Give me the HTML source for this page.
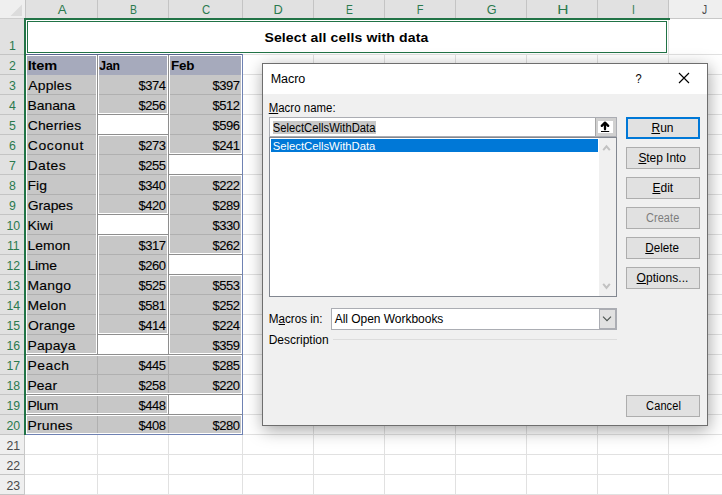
<!DOCTYPE html>
<html><head><meta charset="utf-8"><title>Macro</title>
<style>
html,body{margin:0;padding:0;}
body{width:722px;height:495px;overflow:hidden;background:#fff;position:relative;font-family:"Liberation Sans",sans-serif;}
div,span{box-sizing:border-box;}
.a{position:absolute;}
.ch{position:absolute;top:0;height:18px;font-size:12.3px;line-height:1;text-align:center;padding-top:4.4px;}
.rh{position:absolute;left:0;width:24px;padding-left:1px;font-size:12.3px;text-align:center;line-height:1;}
.t{position:absolute;line-height:1;white-space:nowrap;}
.num{position:absolute;line-height:1;white-space:nowrap;font-size:13px;text-align:right;-webkit-text-stroke:0.1px #000;}
.b{font-weight:bold;}
.btn{position:absolute;left:626px;width:74px;height:22px;background:#e1e1e1;border:1px solid #adadad;}
u{text-decoration:underline;text-underline-offset:1px;text-decoration-thickness:1px;}
i{display:inline-block;width:0;height:0;}
</style></head><body>

<div class="a" style="left:97px;top:18px;width:1px;height:477px;background:#e1e1e1"></div>
<div class="a" style="left:168px;top:18px;width:1px;height:477px;background:#e1e1e1"></div>
<div class="a" style="left:242px;top:18px;width:1px;height:477px;background:#e1e1e1"></div>
<div class="a" style="left:313px;top:18px;width:1px;height:477px;background:#e1e1e1"></div>
<div class="a" style="left:384px;top:18px;width:1px;height:477px;background:#e1e1e1"></div>
<div class="a" style="left:455px;top:18px;width:1px;height:477px;background:#e1e1e1"></div>
<div class="a" style="left:526px;top:18px;width:1px;height:477px;background:#e1e1e1"></div>
<div class="a" style="left:597px;top:18px;width:1px;height:477px;background:#e1e1e1"></div>
<div class="a" style="left:668px;top:18px;width:1px;height:477px;background:#e1e1e1"></div>
<div class="a" style="left:25px;top:54px;width:697px;height:1px;background:#e1e1e1"></div>
<div class="a" style="left:25px;top:74px;width:697px;height:1px;background:#e1e1e1"></div>
<div class="a" style="left:25px;top:94px;width:697px;height:1px;background:#e1e1e1"></div>
<div class="a" style="left:25px;top:114px;width:697px;height:1px;background:#e1e1e1"></div>
<div class="a" style="left:25px;top:134px;width:697px;height:1px;background:#e1e1e1"></div>
<div class="a" style="left:25px;top:154px;width:697px;height:1px;background:#e1e1e1"></div>
<div class="a" style="left:25px;top:174px;width:697px;height:1px;background:#e1e1e1"></div>
<div class="a" style="left:25px;top:194px;width:697px;height:1px;background:#e1e1e1"></div>
<div class="a" style="left:25px;top:214px;width:697px;height:1px;background:#e1e1e1"></div>
<div class="a" style="left:25px;top:234px;width:697px;height:1px;background:#e1e1e1"></div>
<div class="a" style="left:25px;top:254px;width:697px;height:1px;background:#e1e1e1"></div>
<div class="a" style="left:25px;top:274px;width:697px;height:1px;background:#e1e1e1"></div>
<div class="a" style="left:25px;top:294px;width:697px;height:1px;background:#e1e1e1"></div>
<div class="a" style="left:25px;top:314px;width:697px;height:1px;background:#e1e1e1"></div>
<div class="a" style="left:25px;top:334px;width:697px;height:1px;background:#e1e1e1"></div>
<div class="a" style="left:25px;top:354px;width:697px;height:1px;background:#e1e1e1"></div>
<div class="a" style="left:25px;top:374px;width:697px;height:1px;background:#e1e1e1"></div>
<div class="a" style="left:25px;top:394px;width:697px;height:1px;background:#e1e1e1"></div>
<div class="a" style="left:25px;top:414px;width:697px;height:1px;background:#e1e1e1"></div>
<div class="a" style="left:25px;top:434px;width:697px;height:1px;background:#e1e1e1"></div>
<div class="a" style="left:25px;top:454px;width:697px;height:1px;background:#e1e1e1"></div>
<div class="a" style="left:25px;top:474px;width:697px;height:1px;background:#e1e1e1"></div>
<div class="a" style="left:25px;top:494px;width:697px;height:1px;background:#e1e1e1"></div>
<div class="a" style="left:0;top:0;width:722px;height:19px;background:#e1e1e1"></div>
<div class="ch" style="left:25px;width:72px;background:#e1e1e1;color:#2a7a4e;">&nbsp;</div>
<div class="a" style="left:97px;top:0;width:1px;height:18px;background:#c4c4c4"></div>
<div class="ch" style="left:98px;width:70px;background:#e1e1e1;color:#2a7a4e;">&nbsp;</div>
<div class="a" style="left:168px;top:0;width:1px;height:18px;background:#c4c4c4"></div>
<div class="ch" style="left:169px;width:73px;background:#e1e1e1;color:#2a7a4e;">&nbsp;</div>
<div class="a" style="left:242px;top:0;width:1px;height:18px;background:#c4c4c4"></div>
<div class="ch" style="left:243px;width:70px;background:#e1e1e1;color:#2a7a4e;">&nbsp;</div>
<div class="a" style="left:313px;top:0;width:1px;height:18px;background:#c4c4c4"></div>
<div class="ch" style="left:314px;width:70px;background:#e1e1e1;color:#2a7a4e;">&nbsp;</div>
<div class="a" style="left:384px;top:0;width:1px;height:18px;background:#c4c4c4"></div>
<div class="ch" style="left:385px;width:70px;background:#e1e1e1;color:#2a7a4e;">&nbsp;</div>
<div class="a" style="left:455px;top:0;width:1px;height:18px;background:#c4c4c4"></div>
<div class="ch" style="left:456px;width:70px;background:#e1e1e1;color:#2a7a4e;">&nbsp;</div>
<div class="a" style="left:526px;top:0;width:1px;height:18px;background:#c4c4c4"></div>
<div class="ch" style="left:527px;width:70px;background:#e1e1e1;color:#2a7a4e;">&nbsp;</div>
<div class="a" style="left:597px;top:0;width:1px;height:18px;background:#c4c4c4"></div>
<div class="ch" style="left:598px;width:70px;background:#e1e1e1;color:#2a7a4e;">&nbsp;</div>
<div class="a" style="left:668px;top:0;width:1px;height:18px;background:#c4c4c4"></div>
<div class="ch" style="left:669px;width:71px;background:#efefef;color:#4a4a4a;">&nbsp;</div>
<div class="a" style="left:740px;top:0;width:1px;height:18px;background:#c4c4c4"></div>
<span class="t" style="left:0;top:4.00px;transform:translateX(57.67px) scaleX(1.0844383308693886);transform-origin:0 0;font-size:12.3px;letter-spacing:0.000px;color:#2a7a4e;">A</span>
<span class="t" style="left:0;top:4.00px;transform:translateX(129.92px) scaleX(0.8454118130112412);transform-origin:0 0;font-size:12.3px;letter-spacing:0.000px;color:#2a7a4e;">B</span>
<span class="t" style="left:0;top:4.00px;transform:translateX(201.99px) scaleX(0.9200862107372179);transform-origin:0 0;font-size:12.3px;letter-spacing:0.000px;color:#2a7a4e;">C</span>
<span class="t" style="left:0;top:4.00px;transform:translateX(273.46px) scaleX(1.0417185352773914);transform-origin:0 0;font-size:12.3px;letter-spacing:0.000px;color:#2a7a4e;">D</span>
<span class="t" style="left:0;top:4.00px;transform:translateX(345.90px) scaleX(0.8341477238652925);transform-origin:0 0;font-size:12.3px;letter-spacing:0.000px;color:#2a7a4e;">E</span>
<span class="t" style="left:0;top:4.00px;transform:translateX(416.63px) scaleX(0.896300202246782);transform-origin:0 0;font-size:12.3px;letter-spacing:0.000px;color:#2a7a4e;">F</span>
<span class="t" style="left:0;top:4.00px;transform:translateX(486.84px) scaleX(1.030000920887029);transform-origin:0 0;font-size:12.3px;letter-spacing:0.000px;color:#2a7a4e;">G</span>
<span class="t" style="left:0;top:4.00px;transform:translateX(557.14px) scaleX(1.2595757007492718);transform-origin:0 0;font-size:12.3px;letter-spacing:0.000px;color:#2a7a4e;">H</span>
<span class="t" style="left:0;top:4.00px;transform:translateX(631.95px) scaleX(0.8370191270378207);transform-origin:0 0;font-size:12.3px;letter-spacing:0.000px;color:#2a7a4e;">I</span>
<span class="t" style="left:0;top:4.00px;transform:translateX(701.97px) scaleX(0.8395853048874047);transform-origin:0 0;font-size:12.3px;letter-spacing:0.000px;color:#4a4a4a;">J</span>
<div class="a" style="left:0;top:0;width:25px;height:19px;background:#efefef"></div>
<svg class="a" style="left:0;top:0" width="25" height="18"><path d="M22 4.5 L22 16 L10.5 16 Z" fill="#dcdcdc"/></svg>
<div class="a" style="left:25px;top:0;width:1px;height:18px;background:#c4c4c4"></div>
<div class="a" style="left:0;top:18px;width:24px;height:1px;background:#cdcdcd"></div>
<div class="a" style="left:669px;top:18px;width:53px;height:1px;background:#c8c8c8"></div>
<div class="rh" style="top:19px;height:35px;background:#e1e1e1;color:#2a7a4e;padding-top:20.60px;padding-left:1px">1</div>
<div class="a" style="left:0;top:54px;width:24px;height:1px;background:#c4c4c4"></div>
<div class="rh" style="top:55px;height:19px;background:#e1e1e1;color:#2a7a4e;padding-top:4.60px;padding-left:1px">2</div>
<div class="a" style="left:0;top:74px;width:24px;height:1px;background:#c4c4c4"></div>
<div class="rh" style="top:75px;height:19px;background:#e1e1e1;color:#2a7a4e;padding-top:4.60px;padding-left:1px">3</div>
<div class="a" style="left:0;top:94px;width:24px;height:1px;background:#c4c4c4"></div>
<div class="rh" style="top:95px;height:19px;background:#e1e1e1;color:#2a7a4e;padding-top:4.60px;padding-left:1px">4</div>
<div class="a" style="left:0;top:114px;width:24px;height:1px;background:#c4c4c4"></div>
<div class="rh" style="top:115px;height:19px;background:#e1e1e1;color:#2a7a4e;padding-top:4.60px;padding-left:1px">5</div>
<div class="a" style="left:0;top:134px;width:24px;height:1px;background:#c4c4c4"></div>
<div class="rh" style="top:135px;height:19px;background:#e1e1e1;color:#2a7a4e;padding-top:4.60px;padding-left:1px">6</div>
<div class="a" style="left:0;top:154px;width:24px;height:1px;background:#c4c4c4"></div>
<div class="rh" style="top:155px;height:19px;background:#e1e1e1;color:#2a7a4e;padding-top:4.60px;padding-left:1px">7</div>
<div class="a" style="left:0;top:174px;width:24px;height:1px;background:#c4c4c4"></div>
<div class="rh" style="top:175px;height:19px;background:#e1e1e1;color:#2a7a4e;padding-top:4.60px;padding-left:1px">8</div>
<div class="a" style="left:0;top:194px;width:24px;height:1px;background:#c4c4c4"></div>
<div class="rh" style="top:195px;height:19px;background:#e1e1e1;color:#2a7a4e;padding-top:4.60px;padding-left:1px">9</div>
<div class="a" style="left:0;top:214px;width:24px;height:1px;background:#c4c4c4"></div>
<div class="rh" style="top:215px;height:19px;background:#e1e1e1;color:#2a7a4e;padding-top:4.60px;padding-left:2.6px">10</div>
<div class="a" style="left:0;top:234px;width:24px;height:1px;background:#c4c4c4"></div>
<div class="rh" style="top:235px;height:19px;background:#e1e1e1;color:#2a7a4e;padding-top:4.60px;padding-left:2.6px">11</div>
<div class="a" style="left:0;top:254px;width:24px;height:1px;background:#c4c4c4"></div>
<div class="rh" style="top:255px;height:19px;background:#e1e1e1;color:#2a7a4e;padding-top:4.60px;padding-left:2.6px">12</div>
<div class="a" style="left:0;top:274px;width:24px;height:1px;background:#c4c4c4"></div>
<div class="rh" style="top:275px;height:19px;background:#e1e1e1;color:#2a7a4e;padding-top:4.60px;padding-left:2.6px">13</div>
<div class="a" style="left:0;top:294px;width:24px;height:1px;background:#c4c4c4"></div>
<div class="rh" style="top:295px;height:19px;background:#e1e1e1;color:#2a7a4e;padding-top:4.60px;padding-left:2.6px">14</div>
<div class="a" style="left:0;top:314px;width:24px;height:1px;background:#c4c4c4"></div>
<div class="rh" style="top:315px;height:19px;background:#e1e1e1;color:#2a7a4e;padding-top:4.60px;padding-left:2.6px">15</div>
<div class="a" style="left:0;top:334px;width:24px;height:1px;background:#c4c4c4"></div>
<div class="rh" style="top:335px;height:19px;background:#e1e1e1;color:#2a7a4e;padding-top:4.60px;padding-left:2.6px">16</div>
<div class="a" style="left:0;top:354px;width:24px;height:1px;background:#c4c4c4"></div>
<div class="rh" style="top:355px;height:19px;background:#e1e1e1;color:#2a7a4e;padding-top:4.60px;padding-left:2.6px">17</div>
<div class="a" style="left:0;top:374px;width:24px;height:1px;background:#c4c4c4"></div>
<div class="rh" style="top:375px;height:19px;background:#e1e1e1;color:#2a7a4e;padding-top:4.60px;padding-left:2.6px">18</div>
<div class="a" style="left:0;top:394px;width:24px;height:1px;background:#c4c4c4"></div>
<div class="rh" style="top:395px;height:19px;background:#e1e1e1;color:#2a7a4e;padding-top:4.60px;padding-left:2.6px">19</div>
<div class="a" style="left:0;top:414px;width:24px;height:1px;background:#c4c4c4"></div>
<div class="rh" style="top:415px;height:19px;background:#e1e1e1;color:#2a7a4e;padding-top:4.60px;padding-left:2.6px">20</div>
<div class="a" style="left:0;top:434px;width:24px;height:1px;background:#c4c4c4"></div>
<div class="rh" style="top:435px;height:19px;background:#efefef;color:#4a4a4a;padding-top:4.60px;padding-left:2.6px">21</div>
<div class="a" style="left:0;top:454px;width:24px;height:1px;background:#c4c4c4"></div>
<div class="rh" style="top:455px;height:19px;background:#efefef;color:#4a4a4a;padding-top:4.60px;padding-left:2.6px">22</div>
<div class="a" style="left:0;top:474px;width:24px;height:1px;background:#c4c4c4"></div>
<div class="rh" style="top:475px;height:19px;background:#efefef;color:#4a4a4a;padding-top:4.60px;padding-left:2.6px">23</div>
<div class="a" style="left:0;top:494px;width:24px;height:1px;background:#c4c4c4"></div>
<div class="a" style="left:24px;top:435px;width:1px;height:60px;background:#c8c8c8"></div>
<div class="a" style="left:24px;top:18px;width:646px;height:2px;background:#217346"></div>
<div class="a" style="left:24px;top:18px;width:2px;height:417px;background:#217346"></div>
<div class="a" style="left:26px;top:20px;width:1px;height:415px;background:#fff"></div>
<div class="a" style="left:26px;top:20px;width:642px;height:34px;background:#fff"></div>
<div class="a" style="left:27px;top:21px;width:640px;height:32px;border:1px solid #217346;background:#fff"></div>
<span class="t" style="left:0;top:31.01px;transform:translateX(264.41px) scaleX(1.04);transform-origin:0 0;font-size:13.5px;letter-spacing:0.119px;color:#000;font-weight:bold;">Select all cells with data</span>
<div class="a" style="left:26px;top:54px;width:72px;height:301px;background:#8e8e8e"></div>
<div class="a" style="left:26px;top:55px;width:71px;height:299px;background:#fff"></div>
<div class="a" style="left:27px;top:56px;width:69px;height:297px;background:#c7c7c7"></div>
<div class="a" style="left:27px;top:56px;width:69px;height:19px;background:#a6aabc"></div>
<div class="a" style="left:27px;top:94px;width:69px;height:1px;background:#b0b0b0"></div>
<div class="a" style="left:27px;top:114px;width:69px;height:1px;background:#b0b0b0"></div>
<div class="a" style="left:27px;top:134px;width:69px;height:1px;background:#b0b0b0"></div>
<div class="a" style="left:27px;top:154px;width:69px;height:1px;background:#b0b0b0"></div>
<div class="a" style="left:27px;top:174px;width:69px;height:1px;background:#b0b0b0"></div>
<div class="a" style="left:27px;top:194px;width:69px;height:1px;background:#b0b0b0"></div>
<div class="a" style="left:27px;top:214px;width:69px;height:1px;background:#b0b0b0"></div>
<div class="a" style="left:27px;top:234px;width:69px;height:1px;background:#b0b0b0"></div>
<div class="a" style="left:27px;top:254px;width:69px;height:1px;background:#b0b0b0"></div>
<div class="a" style="left:27px;top:274px;width:69px;height:1px;background:#b0b0b0"></div>
<div class="a" style="left:27px;top:294px;width:69px;height:1px;background:#b0b0b0"></div>
<div class="a" style="left:27px;top:314px;width:69px;height:1px;background:#b0b0b0"></div>
<div class="a" style="left:27px;top:334px;width:69px;height:1px;background:#b0b0b0"></div>
<div class="a" style="left:97px;top:54px;width:72px;height:61px;background:#8e8e8e"></div>
<div class="a" style="left:98px;top:55px;width:70px;height:59px;background:#fff"></div>
<div class="a" style="left:99px;top:56px;width:68px;height:57px;background:#c7c7c7"></div>
<div class="a" style="left:99px;top:56px;width:68px;height:19px;background:#a6aabc"></div>
<div class="a" style="left:99px;top:94px;width:68px;height:1px;background:#b0b0b0"></div>
<div class="a" style="left:168px;top:54px;width:75px;height:101px;background:#8e8e8e"></div>
<div class="a" style="left:169px;top:55px;width:73px;height:99px;background:#fff"></div>
<div class="a" style="left:170px;top:56px;width:71px;height:97px;background:#c7c7c7"></div>
<div class="a" style="left:170px;top:56px;width:71px;height:19px;background:#a6aabc"></div>
<div class="a" style="left:170px;top:94px;width:71px;height:1px;background:#b0b0b0"></div>
<div class="a" style="left:170px;top:114px;width:71px;height:1px;background:#b0b0b0"></div>
<div class="a" style="left:170px;top:134px;width:71px;height:1px;background:#b0b0b0"></div>
<div class="a" style="left:97px;top:134px;width:72px;height:81px;background:#8e8e8e"></div>
<div class="a" style="left:98px;top:135px;width:70px;height:79px;background:#fff"></div>
<div class="a" style="left:99px;top:136px;width:68px;height:77px;background:#c7c7c7"></div>
<div class="a" style="left:99px;top:154px;width:68px;height:1px;background:#b0b0b0"></div>
<div class="a" style="left:99px;top:174px;width:68px;height:1px;background:#b0b0b0"></div>
<div class="a" style="left:99px;top:194px;width:68px;height:1px;background:#b0b0b0"></div>
<div class="a" style="left:168px;top:174px;width:75px;height:81px;background:#8e8e8e"></div>
<div class="a" style="left:169px;top:175px;width:73px;height:79px;background:#fff"></div>
<div class="a" style="left:170px;top:176px;width:71px;height:77px;background:#c7c7c7"></div>
<div class="a" style="left:170px;top:194px;width:71px;height:1px;background:#b0b0b0"></div>
<div class="a" style="left:170px;top:214px;width:71px;height:1px;background:#b0b0b0"></div>
<div class="a" style="left:170px;top:234px;width:71px;height:1px;background:#b0b0b0"></div>
<div class="a" style="left:97px;top:234px;width:72px;height:101px;background:#8e8e8e"></div>
<div class="a" style="left:98px;top:235px;width:70px;height:99px;background:#fff"></div>
<div class="a" style="left:99px;top:236px;width:68px;height:97px;background:#c7c7c7"></div>
<div class="a" style="left:99px;top:254px;width:68px;height:1px;background:#b0b0b0"></div>
<div class="a" style="left:99px;top:274px;width:68px;height:1px;background:#b0b0b0"></div>
<div class="a" style="left:99px;top:294px;width:68px;height:1px;background:#b0b0b0"></div>
<div class="a" style="left:99px;top:314px;width:68px;height:1px;background:#b0b0b0"></div>
<div class="a" style="left:168px;top:274px;width:75px;height:81px;background:#8e8e8e"></div>
<div class="a" style="left:169px;top:275px;width:73px;height:79px;background:#fff"></div>
<div class="a" style="left:170px;top:276px;width:71px;height:77px;background:#c7c7c7"></div>
<div class="a" style="left:170px;top:294px;width:71px;height:1px;background:#b0b0b0"></div>
<div class="a" style="left:170px;top:314px;width:71px;height:1px;background:#b0b0b0"></div>
<div class="a" style="left:170px;top:334px;width:71px;height:1px;background:#b0b0b0"></div>
<div class="a" style="left:26px;top:354px;width:217px;height:41px;background:#8e8e8e"></div>
<div class="a" style="left:26px;top:355px;width:216px;height:39px;background:#fff"></div>
<div class="a" style="left:27px;top:356px;width:214px;height:37px;background:#c7c7c7"></div>
<div class="a" style="left:27px;top:374px;width:214px;height:1px;background:#b0b0b0"></div>
<div class="a" style="left:97px;top:356px;width:1px;height:37px;background:#b0b0b0"></div>
<div class="a" style="left:168px;top:356px;width:1px;height:37px;background:#b0b0b0"></div>
<div class="a" style="left:26px;top:394px;width:143px;height:21px;background:#8e8e8e"></div>
<div class="a" style="left:26px;top:395px;width:142px;height:19px;background:#fff"></div>
<div class="a" style="left:27px;top:396px;width:140px;height:17px;background:#c7c7c7"></div>
<div class="a" style="left:97px;top:396px;width:1px;height:17px;background:#b0b0b0"></div>
<div class="a" style="left:26px;top:414px;width:217px;height:21px;background:#8e8e8e"></div>
<div class="a" style="left:26px;top:415px;width:216px;height:19px;background:#fff"></div>
<div class="a" style="left:27px;top:416px;width:214px;height:17px;background:#c7c7c7"></div>
<div class="a" style="left:97px;top:416px;width:1px;height:17px;background:#b0b0b0"></div>
<div class="a" style="left:168px;top:416px;width:1px;height:17px;background:#b0b0b0"></div>
<div class="a" style="left:26px;top:54px;width:217px;height:1px;background:#56648f"></div>
<div class="a" style="left:242px;top:54px;width:1px;height:381px;background:#6e81b2"></div>
<div class="a" style="left:26px;top:434px;width:217px;height:1px;background:#6e81b2"></div>
<span class="t" style="left:0;top:59.00px;transform:translateX(27.68px) scaleX(1.12);transform-origin:0 0;font-size:13px;letter-spacing:-0.114px;color:#000;font-weight:bold;">Item</span>
<span class="t" style="left:0;top:59.00px;transform:translateX(99.21px) scaleX(0.94);transform-origin:0 0;font-size:13px;letter-spacing:-0.119px;color:#000;font-weight:bold;">Jan</span>
<span class="t" style="left:0;top:59.00px;transform:translateX(170.96px) scaleX(1.03);transform-origin:0 0;font-size:13px;letter-spacing:-0.124px;color:#000;font-weight:bold;">Feb</span>
<span class="t" style="left:0;top:79.00px;transform:translateX(28.36px) scaleX(1.07);transform-origin:0 0;font-size:13px;letter-spacing:0.129px;color:#000;-webkit-text-stroke:0.12px #000;">Apples</span>
<span class="num" style="left:100px;width:65.55px;top:79px;letter-spacing:-0.45px">$374</span>
<span class="num" style="left:172px;width:67.55px;top:79px;letter-spacing:-0.45px">$397</span>
<span class="t" style="left:0;top:99.00px;transform:translateX(27.46px) scaleX(1.07);transform-origin:0 0;font-size:13px;letter-spacing:-0.023px;color:#000;-webkit-text-stroke:0.12px #000;">Banana</span>
<span class="num" style="left:100px;width:65.55px;top:99px;letter-spacing:-0.45px">$256</span>
<span class="num" style="left:172px;width:67.55px;top:99px;letter-spacing:-0.45px">$512</span>
<span class="t" style="left:0;top:119.00px;transform:translateX(27.86px) scaleX(1.07);transform-origin:0 0;font-size:13px;letter-spacing:0.088px;color:#000;-webkit-text-stroke:0.12px #000;">Cherries</span>
<span class="num" style="left:172px;width:67.55px;top:119px;letter-spacing:-0.45px">$596</span>
<span class="t" style="left:0;top:139.00px;transform:translateX(27.86px) scaleX(1.07);transform-origin:0 0;font-size:13px;letter-spacing:0.567px;color:#000;-webkit-text-stroke:0.12px #000;">Coconut</span>
<span class="num" style="left:100px;width:65.55px;top:139px;letter-spacing:-0.45px">$273</span>
<span class="num" style="left:172px;width:67.55px;top:139px;letter-spacing:-0.45px">$241</span>
<span class="t" style="left:0;top:159.00px;transform:translateX(27.46px) scaleX(1.07);transform-origin:0 0;font-size:13px;letter-spacing:0.441px;color:#000;-webkit-text-stroke:0.12px #000;">Dates</span>
<span class="num" style="left:100px;width:65.55px;top:159px;letter-spacing:-0.45px">$255</span>
<span class="t" style="left:0;top:179.00px;transform:translateX(27.46px) scaleX(1.07);transform-origin:0 0;font-size:13px;letter-spacing:0.139px;color:#000;-webkit-text-stroke:0.12px #000;">Fig</span>
<span class="num" style="left:100px;width:65.55px;top:179px;letter-spacing:-0.45px">$340</span>
<span class="num" style="left:172px;width:67.55px;top:179px;letter-spacing:-0.45px">$222</span>
<span class="t" style="left:0;top:199.00px;transform:translateX(27.86px) scaleX(1.07);transform-origin:0 0;font-size:13px;letter-spacing:-0.098px;color:#000;-webkit-text-stroke:0.12px #000;">Grapes</span>
<span class="num" style="left:100px;width:65.55px;top:199px;letter-spacing:-0.45px">$420</span>
<span class="num" style="left:172px;width:67.55px;top:199px;letter-spacing:-0.45px">$289</span>
<span class="t" style="left:0;top:219.00px;transform:translateX(27.54px) scaleX(1.07);transform-origin:0 0;font-size:13px;letter-spacing:0.020px;color:#000;-webkit-text-stroke:0.12px #000;">Kiwi</span>
<span class="num" style="left:172px;width:67.55px;top:219px;letter-spacing:-0.45px">$330</span>
<span class="t" style="left:0;top:239.00px;transform:translateX(27.46px) scaleX(1.07);transform-origin:0 0;font-size:13px;letter-spacing:0.034px;color:#000;-webkit-text-stroke:0.12px #000;">Lemon</span>
<span class="num" style="left:100px;width:65.55px;top:239px;letter-spacing:-0.45px">$317</span>
<span class="num" style="left:172px;width:67.55px;top:239px;letter-spacing:-0.45px">$262</span>
<span class="t" style="left:0;top:259.00px;transform:translateX(27.46px) scaleX(1.07);transform-origin:0 0;font-size:13px;letter-spacing:-0.225px;color:#000;-webkit-text-stroke:0.12px #000;">Lime</span>
<span class="num" style="left:100px;width:65.55px;top:259px;letter-spacing:-0.45px">$260</span>
<span class="t" style="left:0;top:279.00px;transform:translateX(27.46px) scaleX(1.07);transform-origin:0 0;font-size:13px;letter-spacing:0.213px;color:#000;-webkit-text-stroke:0.12px #000;">Mango</span>
<span class="num" style="left:100px;width:65.55px;top:279px;letter-spacing:-0.45px">$525</span>
<span class="num" style="left:172px;width:67.55px;top:279px;letter-spacing:-0.45px">$553</span>
<span class="t" style="left:0;top:299.00px;transform:translateX(27.46px) scaleX(1.07);transform-origin:0 0;font-size:13px;letter-spacing:0.224px;color:#000;-webkit-text-stroke:0.12px #000;">Melon</span>
<span class="num" style="left:100px;width:65.55px;top:299px;letter-spacing:-0.45px">$581</span>
<span class="num" style="left:172px;width:67.55px;top:299px;letter-spacing:-0.45px">$252</span>
<span class="t" style="left:0;top:319.00px;transform:translateX(27.92px) scaleX(1.07);transform-origin:0 0;font-size:13px;letter-spacing:0.151px;color:#000;-webkit-text-stroke:0.12px #000;">Orange</span>
<span class="num" style="left:100px;width:65.55px;top:319px;letter-spacing:-0.45px">$414</span>
<span class="num" style="left:172px;width:67.55px;top:319px;letter-spacing:-0.45px">$224</span>
<span class="t" style="left:0;top:339.00px;transform:translateX(27.46px) scaleX(1.07);transform-origin:0 0;font-size:13px;letter-spacing:0.140px;color:#000;-webkit-text-stroke:0.12px #000;">Papaya</span>
<span class="num" style="left:172px;width:67.55px;top:339px;letter-spacing:-0.45px">$359</span>
<span class="t" style="left:0;top:359.00px;transform:translateX(27.46px) scaleX(1.07);transform-origin:0 0;font-size:13px;letter-spacing:0.463px;color:#000;-webkit-text-stroke:0.12px #000;">Peach</span>
<span class="num" style="left:100px;width:65.55px;top:359px;letter-spacing:-0.45px">$445</span>
<span class="num" style="left:172px;width:67.55px;top:359px;letter-spacing:-0.45px">$285</span>
<span class="t" style="left:0;top:379.00px;transform:translateX(27.46px) scaleX(1.07);transform-origin:0 0;font-size:13px;letter-spacing:0.068px;color:#000;-webkit-text-stroke:0.12px #000;">Pear</span>
<span class="num" style="left:100px;width:65.55px;top:379px;letter-spacing:-0.45px">$258</span>
<span class="num" style="left:172px;width:67.55px;top:379px;letter-spacing:-0.45px">$220</span>
<span class="t" style="left:0;top:399.00px;transform:translateX(27.46px) scaleX(1.07);transform-origin:0 0;font-size:13px;letter-spacing:-0.219px;color:#000;-webkit-text-stroke:0.12px #000;">Plum</span>
<span class="num" style="left:100px;width:65.55px;top:399px;letter-spacing:-0.45px">$448</span>
<span class="t" style="left:0;top:419.00px;transform:translateX(27.46px) scaleX(1.07);transform-origin:0 0;font-size:13px;letter-spacing:0.188px;color:#000;-webkit-text-stroke:0.12px #000;">Prunes</span>
<span class="num" style="left:100px;width:65.55px;top:419px;letter-spacing:-0.45px">$408</span>
<span class="num" style="left:172px;width:67.55px;top:419px;letter-spacing:-0.45px">$280</span>
<div class="a" style="left:262px;top:63px;width:446px;height:363px;background:#f0f0f0;border:1px solid #6e6e6e;box-shadow:1px 4px 16px rgba(0,0,0,0.36)"></div>
<div class="a" style="left:263px;top:64px;width:444px;height:30px;background:#fff"></div>
<span class="t" style="left:0;top:71.5px;font-size:13.5px;transform:translateX(635.6px) scaleX(0.82);transform-origin:0 0">?</span>
<svg class="a" style="left:677px;top:71px" width="14" height="14"><path d="M2 2 L12 12 M12 2 L2 12" stroke="#000" stroke-width="1.15" fill="none"/></svg>
<div class="a" style="left:269px;top:117px;width:348px;height:20px;background:#fff;border:1px solid #abadb3"></div>
<div class="a" style="left:273px;top:121px;width:103px;height:13px;background:#c8c8c8"></div>
<div class="a" style="left:595px;top:118px;width:1px;height:18px;background:#a6a6a6"></div>
<div class="a" style="left:596px;top:118px;width:20px;height:18px;background:#d0d0d0"></div>
<div class="a" style="left:598px;top:121px;width:15px;height:12px;background:#fff"></div>
<svg class="a" style="left:595px;top:117px" width="22" height="20"><path d="M6.8 8.9 L10 5.6 L13.2 8.9" stroke="#000" stroke-width="2.3" stroke-linecap="round" stroke-linejoin="round" fill="none"/><path d="M10 6.5 L10 12.3" stroke="#000" stroke-width="2.3" stroke-linecap="round" fill="none"/><rect x="6" y="14" width="8.2" height="1" fill="#000"/></svg>
<div class="a" style="left:269px;top:137px;width:348px;height:160px;background:#fff;border:1px solid #828790"></div>
<div class="a" style="left:271px;top:139px;width:327px;height:13px;background:#0078d7"></div>
<div class="a" style="left:599px;top:138px;width:17px;height:158px;background:#f0f0f0"></div>
<svg class="a" style="left:599px;top:138px" width="17" height="158"><path d="M4.2 12.2 L7.5 8.4 L10.8 12.2" stroke="#c2c2c2" stroke-width="2" fill="none"/><path d="M4.2 145.9 L7.5 149.9 L10.8 145.9" stroke="#c2c2c2" stroke-width="2" fill="none"/></svg>
<div class="a" style="left:331px;top:308px;width:286px;height:22px;background:#fff;border:1px solid #abadb3"></div>
<div class="a" style="left:599px;top:309px;width:17px;height:20px;background:#e1e1e1;border:1px solid #abadb3"></div>
<svg class="a" style="left:599px;top:308px" width="18" height="22"><path d="M4 8.6 L8 12.6 L12 8.6" stroke="#4a524e" stroke-width="1.1" fill="none"/></svg>
<div class="a" style="left:333px;top:339px;width:284px;height:1px;background:#dcdcdc"></div>

<div class="btn" style="top:117px;border:2px solid #0078d7;"></div>
<div class="btn" style="top:147px;"></div>
<div class="btn" style="top:177px;"></div>
<div class="btn" style="top:207px;"></div>
<div class="btn" style="top:237px;"></div>
<div class="btn" style="top:267px;"></div>
<div class="btn" style="top:395px;"></div>
<span class="t" style="left:0;top:73.00px;transform:translateX(270.70px) scaleX(1.045);transform-origin:0 0;font-size:12px;letter-spacing:-0.050px;color:#000;">Macro</span>
<span class="t" style="left:0;top:102.01px;transform:translateX(268.70px) scaleX(0.95);transform-origin:0 0;font-size:12px;letter-spacing:0.036px;color:#000;"><u>M</u>acro name:</span>
<span class="t" style="left:0;top:122.00px;transform:translateX(272.70px) scaleX(0.935);transform-origin:0 0;font-size:12px;letter-spacing:0.031px;color:#000;">SelectCellsWithData</span>
<span class="t" style="left:0;top:141.01px;transform:translateX(272.74px) scaleX(0.98);transform-origin:0 0;font-size:11.5px;letter-spacing:-0.010px;color:#fff;">SelectCellsWithData</span>
<span class="t" style="left:0;top:313.01px;transform:translateX(268.75px) scaleX(0.975);transform-origin:0 0;font-size:12px;letter-spacing:-0.018px;color:#000;">M<u>a</u>cros in:</span>
<span class="t" style="left:334.69px;top:313.01px;font-size:12px;letter-spacing:-0.029px;color:#000;">All Open Workbooks</span>
<span class="t" style="left:268.66px;top:334.01px;font-size:12px;letter-spacing:-0.000px;color:#000;">Description</span>
<span class="t" style="left:651.38px;top:122.00px;font-size:12px;letter-spacing:0.074px;color:#000;"><u>R</u>un</span>
<span class="t" style="left:638.38px;top:152.00px;font-size:12px;letter-spacing:-0.058px;color:#000;"><u>S</u>tep Into</span>
<span class="t" style="left:652.38px;top:182.00px;font-size:12px;letter-spacing:0.036px;color:#000;"><u>E</u>dit</span>
<span class="t" style="left:0;top:212.00px;transform:translateX(646.01px) scaleX(0.91);transform-origin:0 0;font-size:12px;letter-spacing:0.093px;color:#7d7d7d;">Create</span>
<span class="t" style="left:0;top:242.00px;transform:translateX(645.28px) scaleX(0.97);transform-origin:0 0;font-size:12px;letter-spacing:0.032px;color:#000;"><u>D</u>elete</span>
<span class="t" style="left:636.60px;top:272.00px;font-size:12px;letter-spacing:0.054px;color:#000;"><u>O</u>ptions...</span>
<span class="t" style="left:0;top:400.00px;transform:translateX(646.12px) scaleX(0.915);transform-origin:0 0;font-size:12px;letter-spacing:0.122px;color:#000;">Cancel</span>
</body></html>
